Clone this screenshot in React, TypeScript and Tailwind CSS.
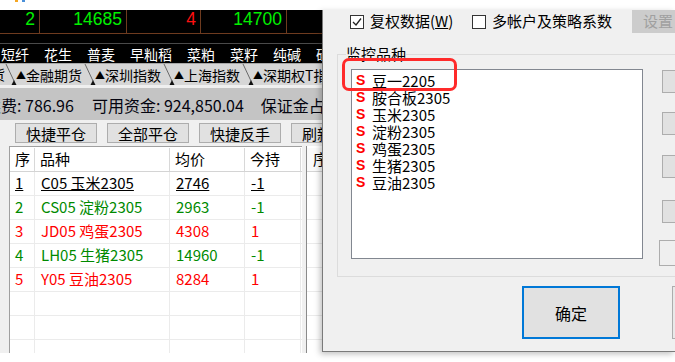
const quotes = [
  { v: "2", w: "w-[40px]", c: "text-[#00f000]" },
  { v: "14685", w: "w-[87px]", c: "text-[#00f000]" },
  { v: "4", w: "w-[74px]", c: "text-[#ff1010]" },
  { v: "14700", w: "w-[86px]", c: "text-[#00f000]" },
];

const categories = ["短纤", "花生", "普麦", "早籼稻", "菜粕", "菜籽", "纯碱", "硅铁"];

const tabs = ["金融期货", "深圳指数", "上海指数", "深期权T指"];

const buttons = [
  { t: "快捷平仓", w: "w-[82px]" },
  { t: "全部平仓", w: "w-[82px]" },
  { t: "快捷反手", w: "w-[82px]" },
  { t: "刷新", w: "w-[52px]" },
];

const positions = [
  { no: "1", name: "C05 玉米2305", price: "2746", hold: "-1", c: "text-black underline" },
  { no: "2", name: "CS05 淀粉2305", price: "2963", hold: "-1", c: "text-[#008a00]" },
  { no: "3", name: "JD05 鸡蛋2305", price: "4308", hold: "1", c: "text-[#ff0000]" },
  { no: "4", name: "LH05 生猪2305", price: "14960", hold: "-1", c: "text-[#008a00]" },
  { no: "5", name: "Y05 豆油2305", price: "8284", hold: "1", c: "text-[#ff0000]" },
];

const watchList = ["豆一2205", "胺合板2305", "玉米2305", "淀粉2305", "鸡蛋2305", "生猪2305", "豆油2305"];

function TabSeparator() {
  return (
    <svg width="11" height="22" viewBox="0 0 11 22" className="shrink-0 overflow-visible" aria-hidden="true">
      <path d="M1 0 L9 17" stroke="#6a6a6a" strokeWidth="1" fill="none" />
      <polygon points="6,22 9,16 12,22" fill="#111" />
    </svg>
  );
}

function CheckBox({ checked }: { checked?: boolean }) {
  return (
    <span className="w-[14px] h-[14px] shrink-0 border border-[#333] bg-white flex items-center justify-center">
      {checked && (
        <svg width="12" height="12" viewBox="0 0 12 12" aria-hidden="true">
          <path d="M2 6 L5 9 L10 2.5" stroke="#222" strokeWidth="1.3" fill="none" />
        </svg>
      )}
    </span>
  );
}

function MainPanel() {
  return (
    <div className="w-[322px] h-full shrink-0 overflow-hidden flex flex-col bg-[#f0f0f0]">
      {/* quote band */}
      <div className="h-[33px] bg-black shrink-0">
        <div className="flex h-[24px] border-b border-[#6e3b1f] font-['Liberation_Sans',sans-serif] text-[17.5px] leading-[18px]">
          {quotes.map((q) => (
            <div key={q.v} className={`${q.w} h-full border-r border-[#6e3b1f] text-right pr-[4px] ${q.c}`}>
              {q.v}
            </div>
          ))}
        </div>
      </div>

      {/* category strip */}
      <div className="h-[20px] shrink-0 bg-black border-t border-[#4a4a4a] flex items-center gap-[15px] pl-[1px] text-white text-[14px] leading-[18px] whitespace-nowrap">
        {categories.map((c) => (
          <span key={c}>{c}</span>
        ))}
      </div>

      {/* tab strip */}
      <div className="h-[22px] shrink-0 bg-[#d6d6d6] border-t border-[#a8a8a8] flex items-stretch text-[14px] leading-[20px] whitespace-nowrap">
        <span className="w-[5px] overflow-hidden flex justify-end shrink-0">
          <span className="shrink-0">货</span>
        </span>
        {tabs.map((t) => (
          <div key={t} className="flex items-stretch shrink-0">
            <TabSeparator />
            <span className="flex items-center pr-[2px]">
              <span className="w-[10px] text-[10px] leading-none">▲</span>
              {t}
            </span>
          </div>
        ))}
      </div>
      <div className="h-[3px] shrink-0 bg-[#efefef]" />

      {/* account band */}
      <div className="h-[32px] shrink-0 bg-[#c4c4c4] flex items-center pt-[2px] text-[16px] text-[#050510] whitespace-nowrap">
        <span className="-ml-[15px]">续费: 786.96</span>
        <span className="ml-[18px]">可用资金: 924,850.04</span>
        <span className="ml-[17px]">保证金占用</span>
      </div>

      {/* quick buttons */}
      <div className="h-[26px] shrink-0 flex items-start pt-[3px] pl-[15px] gap-[10px] text-[15px] whitespace-nowrap">
        {buttons.map((b) => (
          <button
            key={b.t}
            className={`${b.w} h-[20px] shrink-0 bg-[#e1e1e1] border border-[#adadad] flex items-center justify-center leading-none`}
          >
            {b.t}
          </button>
        ))}
      </div>

      {/* tables */}
      <div className="flex flex-1 min-h-0">
        <div className="ml-[9px] w-[293px] shrink-0 border-t border-l border-[#a0a0a0] bg-white pt-[1px] text-[15px]">
          <div className="grid grid-cols-[25px_135px_75px_56px] h-[24px] border-b border-[#d4d4d4]">
            {["序", "品种", "均价", "今持"].map((h) => (
              <div key={h} className="border-r border-[#d8d8d8] flex items-center pl-[5px]">
                {h}
              </div>
            ))}
          </div>
          {positions.map((p) => (
            <div key={p.no} className={`grid grid-cols-[25px_135px_75px_56px] h-[24px] border-b border-[#ebebeb] ${p.c}`}>
              <div className="border-r border-[#ebebeb] flex items-center pl-[5px]">{p.no}</div>
              <div className="border-r border-[#ebebeb] flex items-center pl-[6px] whitespace-nowrap">{p.name}</div>
              <div className="border-r border-[#ebebeb] flex items-center pl-[6px]">{p.price}</div>
              <div className="border-r border-[#ebebeb] flex items-center pl-[6px]">{p.hold}</div>
            </div>
          ))}
          {[0, 1, 2].map((i) => (
            <div key={i} className="grid grid-cols-[25px_135px_75px_56px] h-[24px] border-b border-[#ebebeb]">
              <div className="border-r border-[#ebebeb]" />
              <div className="border-r border-[#ebebeb]" />
              <div className="border-r border-[#ebebeb]" />
              <div className="border-r border-[#ebebeb]" />
            </div>
          ))}
        </div>
        <div className="ml-[4px] flex-1 border-l border-[#8a8a8a] bg-white pt-[2px] text-[15px]">
          <div className="h-[24px] border-b border-[#d4d4d4] bg-[#fafafa] flex items-center pl-[6px]">序</div>
          {[0, 1, 2, 3, 4, 5, 6, 7].map((i) => (
            <div key={i} className="h-[24px] border-b border-[#ebebeb]" />
          ))}
        </div>
      </div>
    </div>
  );
}

function Dialog() {
  return (
    <div className="relative z-10 flex-1 h-[342px] bg-[#f0f0f0] border-l border-b border-[#7a7a7a] shadow-[-2px_2px_6px_rgba(0,0,0,0.25)] overflow-hidden flex flex-col text-[15px] text-black">
      {/* options row */}
      <div className="h-[23px] shrink-0 flex items-center pl-[27px] whitespace-nowrap">
        <CheckBox checked />
        <span className="ml-[6px] w-[102px] shrink-0">
          复权数据(<span className="underline">W</span>)
        </span>
        <CheckBox />
        <span className="ml-[6px]">多帐户及策略系数</span>
        <div className="ml-auto self-stretch w-[60px] -mr-[17px] shrink-0 bg-[#cccccc] text-[#a0a0a0] flex items-center pl-[11px]">
          设置
        </div>
      </div>

      {/* monitored list */}
      <fieldset className="ml-[14px] mt-[12px] -mr-[40px] h-[232px] shrink-0 border border-[#dcdcdc]">
        <legend className="ml-[8px] px-0 leading-[18px]">监控品种</legend>
        <div className="flex items-start mt-[6px]">
          <div className="ml-[13px] w-[292px] h-[190px] shrink-0 border border-[#828790] bg-white pt-[2px] pl-[4px]">
            {watchList.map((w) => (
              <div key={w} className="h-[17px] flex items-center whitespace-nowrap leading-[17px]">
                <span className="w-[16px] shrink-0 font-['Liberation_Sans',sans-serif] font-bold text-[14px] text-[#ff0000]">S</span>
                <span>{w}</span>
              </div>
            ))}
          </div>
          <div className="ml-[19px] flex flex-col">
            <div className="mt-[1px] w-[75px] h-[23px] bg-[#e1e1e1] border border-[#adadad]" />
            <div className="mt-[19px] w-[75px] h-[23px] bg-[#e1e1e1] border border-[#adadad]" />
            <div className="mt-[20px] w-[75px] h-[23px] bg-[#e1e1e1] border border-[#adadad]" />
            <div className="mt-[22px] w-[75px] h-[23px] bg-[#e1e1e1] border border-[#adadad]" />
            <div className="mt-[17px] -ml-[3px] w-[75px] h-[26px] bg-[#efefef] border border-[#adadad]" />
          </div>
        </div>
      </fieldset>

      {/* footer buttons */}
      <div className="flex items-start mt-[9px] pl-[199px]">
        <button className="w-[98px] h-[53px] shrink-0 border-2 border-[#0078d7] bg-[#e1e1e1] text-[16px] flex items-center justify-center">
          确定
        </button>
        <div className="ml-[52px] w-[80px] h-[53px] shrink-0 border border-[#adadad] bg-[#e9e9e9]" />
      </div>

      {/* annotation */}
      <div className="absolute left-[19px] top-[48px] w-[115px] h-[33px] border-[3px] border-[#ff2a2a] rounded-[7px]" />
    </div>
  );
}

export default function App() {
  return (
    <div className="w-[675px] h-[362px] bg-white overflow-hidden font-['Noto_Sans_CJK_SC',sans-serif]">
      <div className="h-[10px] flex items-start pl-[15px] gap-[4px]">
        <div className="w-[3px] h-[2px] bg-[#f5a623]" />
        <div className="w-[3px] h-[2px] bg-[#4a90d9]" />
      </div>
      <div className="flex h-[343px]">
        <MainPanel />
        <Dialog />
      </div>
    </div>
  );
}
